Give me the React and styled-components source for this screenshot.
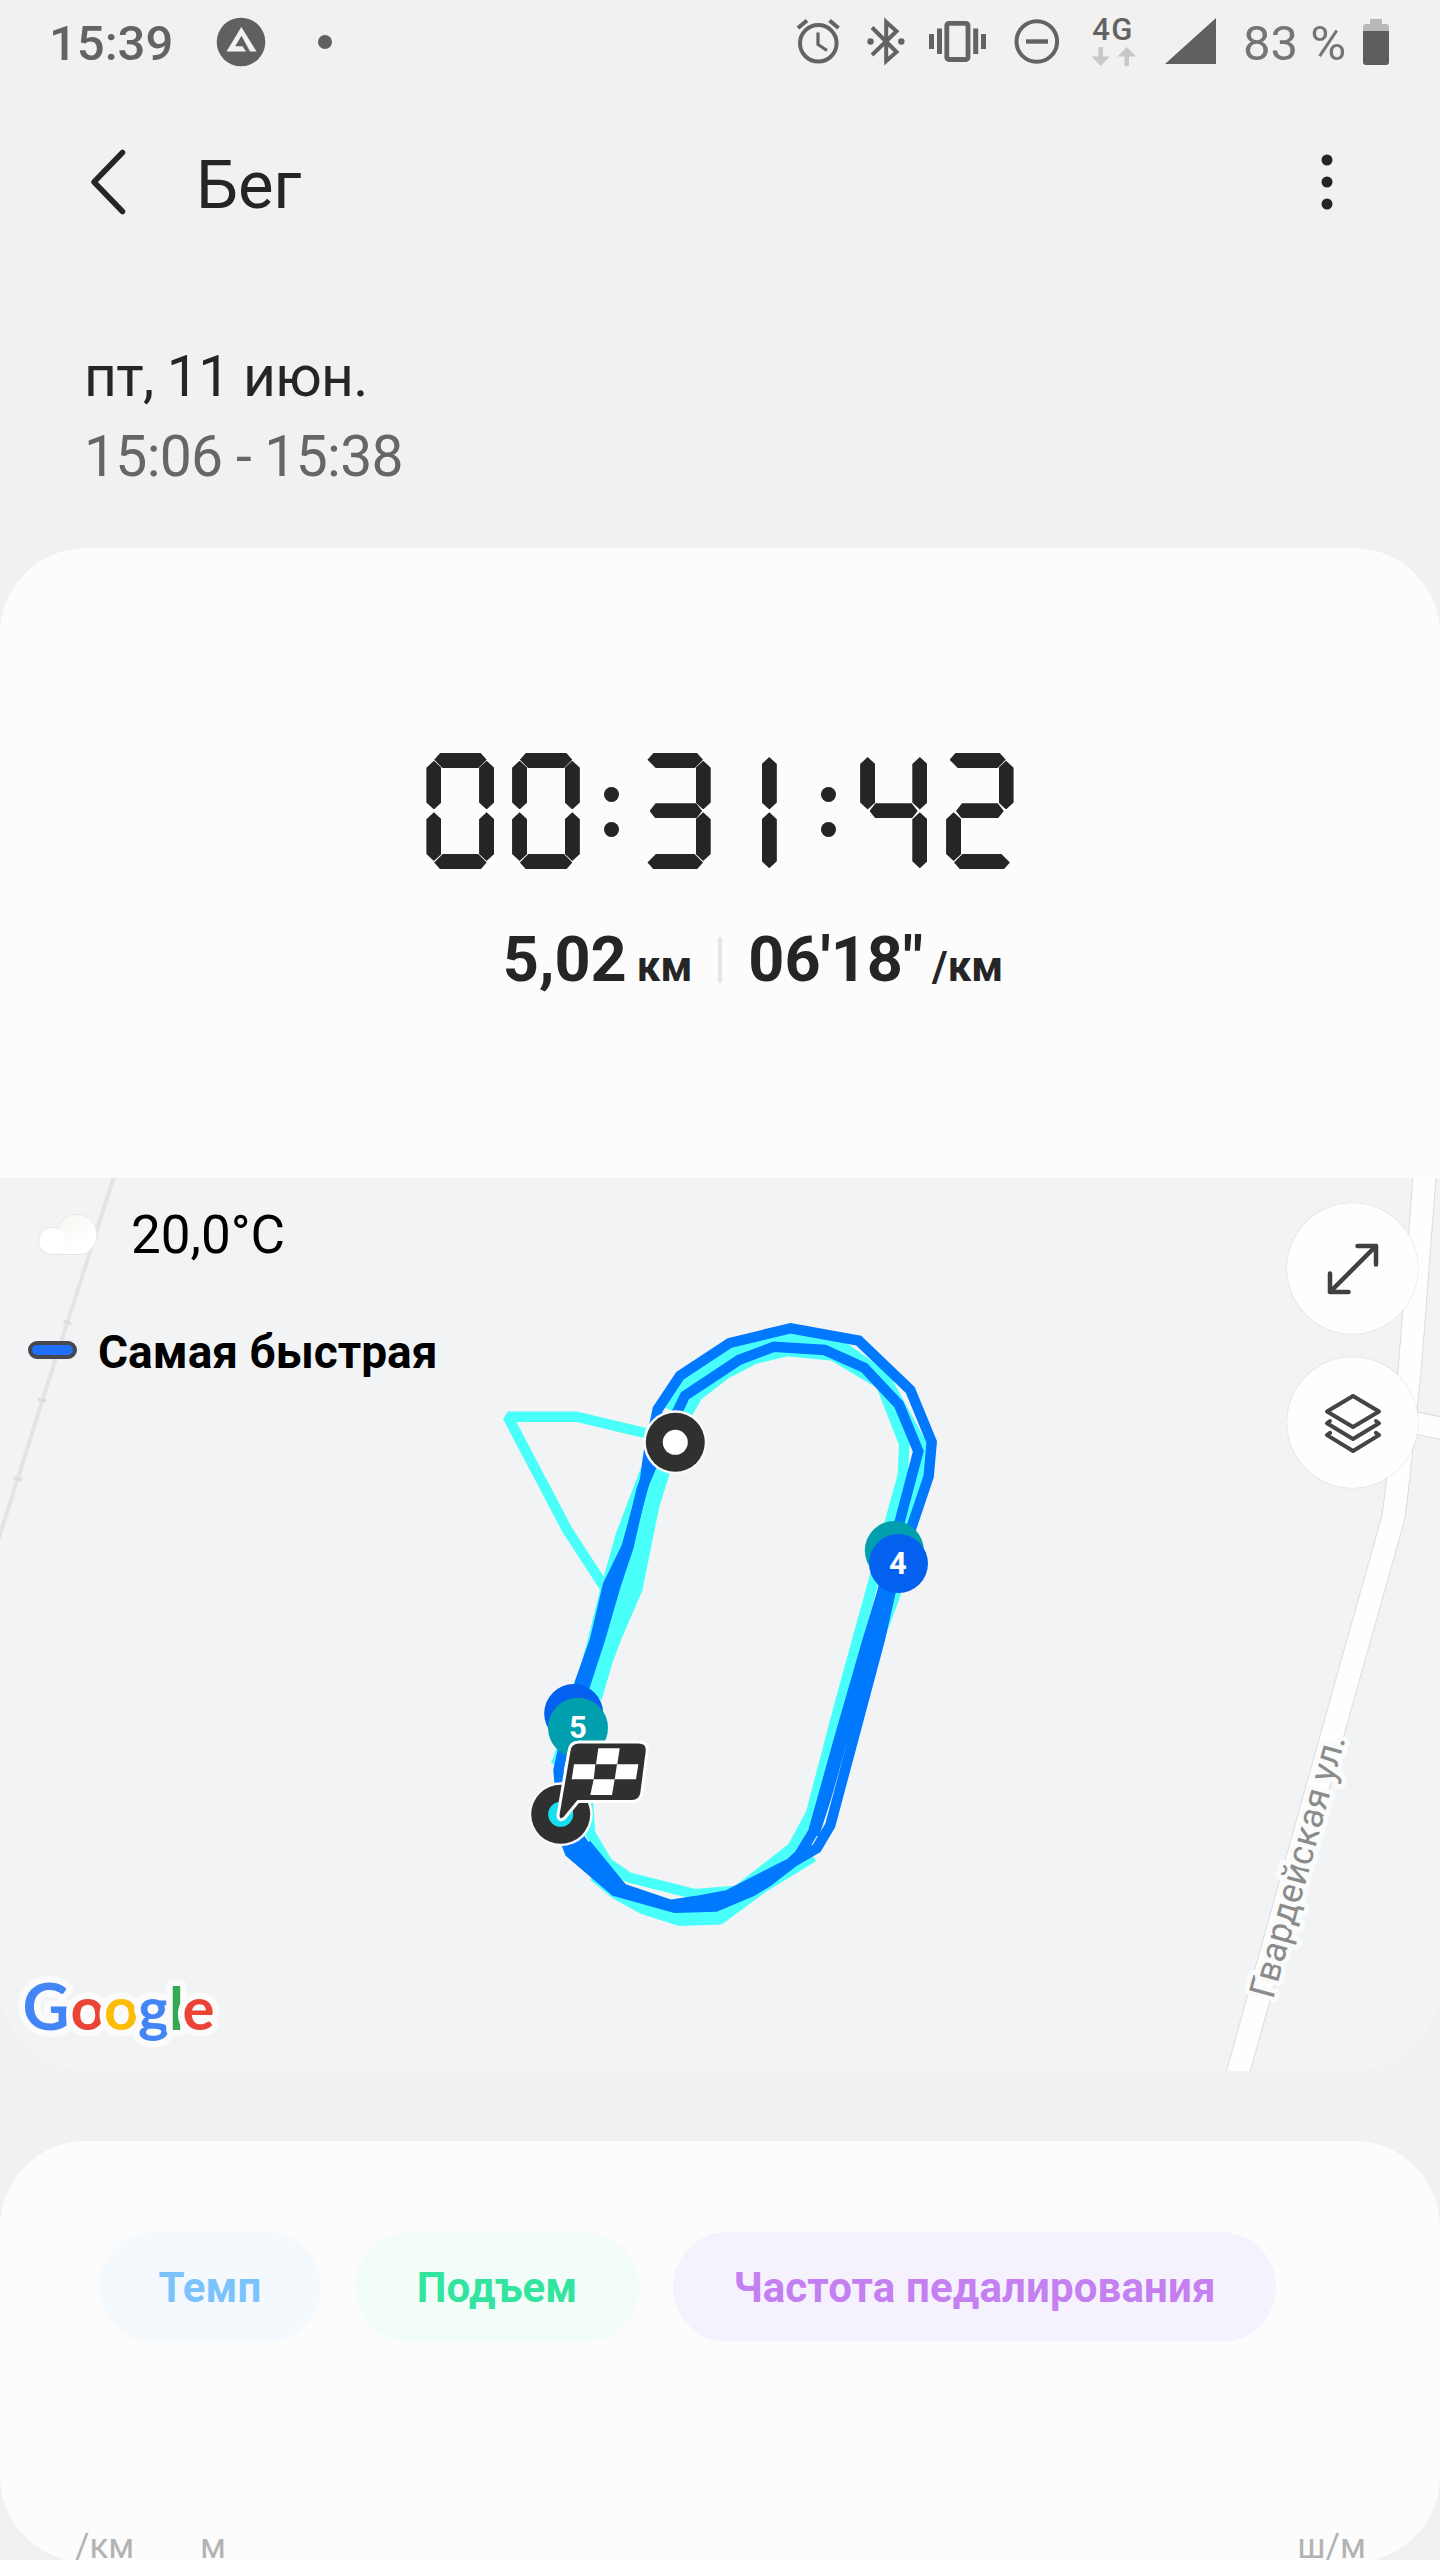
import React from 'react';
import styled, { createGlobalStyle } from 'styled-components';

/*styles start */
const GlobalStyle = createGlobalStyle`
  * {
    box-sizing: border-box;
  }

  body {
    margin: 0;
    background-color: #f1f1f1;
    font-family: Roboto, "Noto Sans", sans-serif;
    color: #252525;
  }

  svg {
    display: block;
  }
`;

const Screen = styled.div`
  display: flex;
  flex-direction: column;
  width: 1440px;
  height: 2560px;
  overflow: hidden;
  background-color: #f1f1f1;

  > * {
    flex: none;
  }
`;

const StatusBar = styled.div`
  display: flex;
  align-items: center;
  height: 87px;
  padding-left: 49px;
  color: #636363;
`;

const StatusText = styled.span`
  width: ${(props) => props.$width}px;
  margin-left: ${(props) => props.$gap || 0}px;
  font-size: 49px;
  line-height: 58px;
  font-weight: ${(props) => props.$weight || 500};
  color: ${(props) => props.$color || 'inherit'};
  white-space: nowrap;
`;

const StatusIcon = styled.svg`
  flex: none;
  height: 87px;
  width: ${(props) => props.$width}px;
  margin-left: ${(props) => props.$gap}px;
  overflow: visible;
`;

const Network = styled.div`
  display: flex;
  flex-direction: column;
  align-items: center;
  width: 46px;
  height: 87px;
  margin-left: 30px;
  padding-top: 12px;
  font-size: 31px;
  line-height: 35px;
  font-weight: 500;
  letter-spacing: 1.5px;
`;

const AppBar = styled.header`
  display: flex;
  align-items: center;
  height: 190px;
  padding: 0 107px 0 88px;
`;

const Title = styled.h1`
  flex: 1;
  margin: 5px 0 0 68px;
  font-size: 67px;
  line-height: 80px;
  font-weight: 400;
  letter-spacing: -0.3px;
`;

const DateBlock = styled.div`
  height: 271px;
  padding: 60px 84px 0;
  font-size: 57px;
  line-height: 80px;
  letter-spacing: -0.7px;
`;

const DateLine = styled.div`
  color: ${(props) => (props.$muted ? '#666' : '#252525')};
`;

const SummaryCard = styled.section`
  display: flex;
  flex-direction: column;
  align-items: center;
  height: 630px;
  padding-top: 205px;
  border-radius: 86px 86px 0 0;
  background-color: #fcfcfc;
`;

const Clock = styled.div`
  display: flex;
  height: 116px;
`;

const Digit = styled.div`
  display: grid;
  flex: none;
  width: ${(props) => props.$width}px;
  height: 116px;
  margin-left: ${(props) => props.$gap}px;
`;

const Bar = styled.i`
  grid-area: 1 / 1;
  background-color: #252525;
  margin: ${(props) => props.$y}px 0 0 ${(props) => props.$x}px;
`;

const HBar = styled(Bar)`
  width: ${(props) => props.$size}px;
  height: 15.2px;
  clip-path: polygon(
    0 ${(props) => props.$tip}%,
    ${(props) => (props.$tip > 50 ? 8.5 : 6)}px 0,
    calc(100% - ${(props) => (props.$tip > 50 ? 8.5 : 6)}px) 0,
    100% ${(props) => props.$tip}%,
    calc(100% - ${(props) => (props.$tip < 50 ? 8.5 : 6)}px) 100%,
    ${(props) => (props.$tip < 50 ? 8.5 : 6)}px 100%
  );
`;

const VBar = styled(Bar)`
  width: 15.1px;
  height: ${(props) => props.$size}px;
  clip-path: polygon(
    50% 0,
    100% 7px,
    100% calc(100% - 7px),
    50% 100%,
    0 calc(100% - 7px),
    0 7px
  );
`;

const Colon = styled.div`
  display: flex;
  flex-direction: column;
  gap: 19.5px;
  width: 15.2px;
  padding-top: 33.5px;
  margin-left: ${(props) => props.$gap}px;

  &::before,
  &::after {
    content: "";
    height: 15.5px;
    border-radius: 50%;
    background-color: #252525;
  }
`;

const Stats = styled.div`
  display: flex;
  align-items: baseline;
  margin-top: 51px;
  padding-left: 66px;
  font-weight: 700;
  line-height: 80px;
`;

const StatValue = styled.span`
  font-size: 63px;
`;

const StatUnit = styled.span`
  margin-left: ${(props) => props.$gap}px;
  font-size: 42px;
`;

const StatDivider = styled.span`
  align-self: center;
  width: 4px;
  height: 46px;
  margin: 0 26px 8px;
  background-color: #e5e5e5;
`;

const MapCard = styled.section`
  position: relative;
  height: 893px;
  border-radius: 0 0 86px 86px;
  overflow: hidden;
  background-color: #f1f3f4;
`;

const MapOverlay = styled.div`
  position: absolute;
  top: 0;
  left: 0;
  right: 0;
  display: flex;
  justify-content: space-between;
  padding: 25px 22px 0 28px;
`;

const MapInfo = styled.div`
  display: flex;
  flex-direction: column;
  color: #000;
`;

const Weather = styled.div`
  display: flex;
  align-items: center;
  height: 62px;
  padding-left: 7px;
  font-size: 53px;
  line-height: 62px;
`;

const Temperature = styled.span`
  margin: 1px 0 0 32px;
`;

const Legend = styled.div`
  display: flex;
  align-items: center;
  margin-top: 60px;
  height: 54px;
  font-size: 46px;
  line-height: 54px;
  font-weight: 700;
`;

const LegendMark = styled.span`
  width: 49px;
  height: 18px;
  margin-right: 21px;
  margin-bottom: 4px;
  border: 4px solid #46484d;
  border-radius: 9px;
  background-color: #1f70fa;
`;

const MapButtons = styled.div`
  display: flex;
  flex-direction: column;
  gap: 23px;
`;

const RoundButton = styled.button`
  display: flex;
  align-items: center;
  justify-content: center;
  width: 131px;
  height: 131px;
  padding: 0;
  border: 0;
  border-radius: 50%;
  background-color: #fefefe;
  box-shadow: 0 0 1px rgba(0, 0, 0, 0.25);
`;

const ChartCard = styled.section`
  display: flex;
  flex-direction: column;
  justify-content: space-between;
  height: 421px;
  margin-top: 70px;
  padding: 91px 74px 0 99px;
  border-radius: 86px;
  background-color: #fcfcfc;
`;

const Chips = styled.div`
  display: flex;
  gap: 34px;
`;

const Chip = styled.button`
  flex: none;
  width: ${(props) => props.$width}px;
  height: 110px;
  padding: 0;
  border: 0;
  border-radius: 55px;
  font-family: inherit;
  font-size: 42px;
  font-weight: 700;
  letter-spacing: 0.15px;
  white-space: nowrap;
  color: ${(props) => props.$color};
  background-color: ${(props) => props.$bg};
`;

const AxisRow = styled.div`
  display: flex;
  height: 27px;
  margin-left: -24px;
  font-size: 35px;
  line-height: 24px;
  color: #b3b3b3;
`;

const AxisUnit = styled.span`
  width: ${(props) => props.$width || 'auto'};
  margin-left: ${(props) => (props.$end ? 'auto' : 0)};
`;
/*styles end */

// every bar of a digit: [direction, x, y, size, tip]
const DIGITS = {
  0: {
    width: 67.8,
    bars: [
      ['h', 7.8, 0, 52.5, 44],
      ['v', 0, 7.7, 48.7],
      ['v', 52.7, 7.7, 48.7],
      ['v', 0, 59.3, 48.7],
      ['v', 52.7, 59.3, 48.7],
      ['h', 7.8, 101, 52.5, 56],
    ],
  },
  1: {
    width: 15.1,
    bars: [
      ['v', 0, 4, 52.6],
      ['v', 0, 59.3, 56],
    ],
  },
  2: {
    width: 67.5,
    bars: [
      ['h', 3.4, 0, 56.3, 44],
      ['v', 52.4, 7.7, 48.7],
      ['h', 9.9, 50.3, 47.8, 50],
      ['v', 0, 59.3, 48.7],
      ['h', 7.9, 101, 55.9, 56],
    ],
  },
  3: {
    width: 63.3,
    bars: [
      ['h', 0, 0, 55.6, 44],
      ['v', 48.2, 7.7, 48.7],
      ['h', 2.1, 50.3, 52.6, 50],
      ['v', 48.2, 59.3, 48.7],
      ['h', 0, 101, 55.6, 56],
    ],
  },
  4: {
    width: 67.5,
    bars: [
      ['v', 0, 4, 52.6],
      ['v', 52.2, 4, 52.6],
      ['h', 9.4, 50.3, 48.2, 50],
      ['v', 52.2, 59.3, 56],
    ],
  },
};

const TIME = [
  { char: '0', gap: 0 },
  { char: '0', gap: 17.9 },
  { char: ':', gap: 24.3 },
  { char: '3', gap: 28.1 },
  { char: '1', gap: 51 },
  { char: ':', gap: 44.3 },
  { char: '4', gap: 23.8 },
  { char: '2', gap: 18.5 },
];

const SLOW_LAPS = [
  '645,1433 576.7,1416.7 507.7,1416.7 567.3,1530 605,1588',
  '672,1450 688.3,1411.7 697.3,1396 725.7,1374 753.3,1359.3 787.3,1351 833.3,1355.7 881,1384.3 904.3,1444.3 902.7,1475.7 889.7,1522.7 857.3,1640 837.3,1712.7 811,1813.3 792.7,1847.3 737.3,1890.7 695,1894.3 628.3,1877.3 607.3,1862.7 590,1833 588,1803',
  '670,1410 682,1386 733,1352 782,1338 842,1346 885,1377 910,1423 925,1450 921,1477 904,1530 895.3,1595 880,1636',
  '813.3,1856.7 763.3,1887.3 720,1919.3 679.7,1920.7 642.3,1908.7 616,1894.3 593.3,1875.7',
  '763,1883 717,1912 678,1914 620,1896',
  '563,1745 556,1765',
];

const FAST_LAPS = [
  '565,1735 579.7,1683 595,1640 608,1585 626.7,1546.7 645,1480 648.7,1453 657.7,1409.3 680,1375.7 729.7,1343 790.7,1328.3 858.7,1340.7 910.3,1390 931.7,1442 928.7,1476.3 911.7,1526.7 890.3,1593 879.7,1640 830.3,1825.3 816.7,1848.3 792.7,1862.3 767.3,1882 751.7,1891.3 715.7,1906.7 675,1907.7 615,1891 570,1852.7 565,1840',
  '560,1787 558.5,1770 563,1750 585.7,1683 600.3,1638.3 615.7,1585 628.7,1546 641.7,1489 651.3,1466.7 676.7,1413 685,1395.7 739,1360 774,1346.7 824.7,1350 864.3,1367.7 899,1404.7 918.3,1451.3 899.3,1523 882,1593 867.7,1640 839.7,1737 813.3,1831.7 799.3,1855 790,1863.3 728.3,1895 696,1901 670.7,1905 622.7,1888.7 586,1844',
  '886,1600 872,1650 844,1735 826,1798 814,1835',
  '888,1600 875,1650 856,1724',
  '568,1838 582,1852 618,1889',
  '578,1836 592,1856 620,1889',
];

const CHIPS = [
  { label: 'Темп', width: 222, color: '#7cc3fe', bg: '#f4f9fd' },
  { label: 'Подъем', width: 284, color: '#33e49f', bg: '#f2fcf9' },
  { label: 'Частота педалирования', width: 603, color: '#c47ff1', bg: '#f5f1fd' },
];

const StopWatch = () => (
  <Clock role="img" aria-label="00:31:42">
    {TIME.map(({ char, gap }, index) =>
      char === ':' ? (
        <Colon key={index} $gap={gap} />
      ) : (
        <Digit key={index} $gap={gap} $width={DIGITS[char].width}>
          {DIGITS[char].bars.map(([dir, x, y, size, tip], i) =>
            dir === 'h' ? (
              <HBar key={i} $x={x} $y={y} $size={size} $tip={tip} />
            ) : (
              <VBar key={i} $x={x} $y={y} $size={size} />
            )
          )}
        </Digit>
      )
    )}
  </Clock>
);

const Status = () => (
  <StatusBar>
    <StatusText $width={125}>15:39</StatusText>
    <StatusIcon $width={49} $gap={42} viewBox="216 0 49 87">
      <circle cx="241" cy="42" r="24.3" fill="#606060" />
      <path d="M250 51.5h6.5L241.3 27 226.5 51.5H246l-3.5-5.3h-7.3l6.3-10.5z" fill="#f1f1f1" />
    </StatusIcon>
    <StatusIcon $width={14} $gap={53} viewBox="318 0 14 87">
      <circle cx="325" cy="42" r="7" fill="#606060" />
    </StatusIcon>
    {/* alarm */}
    <StatusIcon $width={43} $gap={465} viewBox="797 0 43 87" fill="none" stroke="#636363">
      <circle cx="818.3" cy="43.3" r="18.3" strokeWidth="4" />
      <path d="M818 32.5v12l9 6" strokeWidth="3.2" />
      <path d="M798 28l9-7.5M838.5 28l-9-7.5" strokeWidth="4.2" />
    </StatusIcon>
    {/* bluetooth */}
    <StatusIcon $width={38} $gap={27} viewBox="867 0 38 87" fill="none" stroke="#636363">
      <path d="M872 27.5l24.5 24.5-10.3 9V22l10.3 9.3L872 55" strokeWidth="4" />
      <circle cx="870.5" cy="41.5" r="3.2" fill="#636363" stroke="none" />
      <circle cx="901.3" cy="41.5" r="3.2" fill="#636363" stroke="none" />
    </StatusIcon>
    {/* vibration */}
    <StatusIcon $width={57} $gap={24} viewBox="929 0 57 87">
      <rect x="946.8" y="23.3" width="21.2" height="36.2" rx="2" fill="none" stroke="#636363" strokeWidth="4.8" />
      <path d="M929 34h5v15h-5zM937 28.5h5V54h-5zM973.2 28.5h5V54h-5zM981 34h5v15h-5z" fill="#636363" />
    </StatusIcon>
    <StatusIcon $width={46} $gap={28} viewBox="1014 0 46 87" fill="none" stroke="#636363">
      <circle cx="1036.8" cy="41.5" r="20.3" strokeWidth="4" />
      <path d="M1026 41.5h22" strokeWidth="4.4" />
    </StatusIcon>
    <Network>
      4G
      <svg width="45" height="19" viewBox="0 0 45 19" fill="#c8c8c8">
        <path d="M7.5 0h4.5v9.5h6.8L9.7 19 .5 9.5h7z" />
        <path d="M33.5 19H38V9.5h7L35.7 0 26.5 9.5h7z" />
      </svg>
    </Network>
    <StatusIcon $width={51} $gap={29} viewBox="1165 0 51 87">
      <path d="M1165 64L1216 18v46z" fill="#606060" />
    </StatusIcon>
    <StatusText $gap={27} $width={106} $weight={400} $color="#757575">
      83 %
    </StatusText>
    <StatusIcon $width={26} $gap={14} viewBox="1363 0 26 87">
      <path d="M1370 19h12v5h5l2 2v8h-26v-8l2-2h5z" fill="#b8b8b8" />
      <path d="M1363 31h26v31q0 3-3 3h-20q-3 0-3-3z" fill="#5e5e5e" />
    </StatusIcon>
  </StatusBar>
);

const RouteMap = () => (
  <svg width="1440" height="893" viewBox="0 1178 1440 893">
    {/* roads */}
    <g fill="none">
      <path d="M116 1170L89 1255 67.5 1322 42.5 1400 18 1478-2 1541" stroke="#e3e4e5" strokeWidth="4" />
      <path d="M63.5 1321.500l8 2M38 1399l8 2M14 1478l8 2" stroke="#dbdcdd" strokeWidth="3" />
      <path d="M1425 1170L1409.5 1373 1398 1480 1393.5 1517 1373 1590 1347.5 1680 1237 2076" stroke="#dcdddd" strokeWidth="24" />
      <path d="M1410 1421.5L1450 1430" stroke="#dcdddd" strokeWidth="23" />
      <path d="M1425 1170L1409.5 1373 1398 1480 1393.5 1517 1373 1590 1347.5 1680 1237 2076" stroke="#fefefe" strokeWidth="22" />
      <path d="M1407 1421L1450 1430" stroke="#fefefe" strokeWidth="21" />
    </g>
    <text
      transform="translate(1273 2000) rotate(-74.5)"
      fontSize="36"
      textLength="271"
      fill="#8b8b8b"
      stroke="#fafbfb"
      strokeWidth="10"
      strokeLinejoin="round"
      paintOrder="stroke"
    >
      Гвардейская ул.
    </text>

    {/* laps */}
    <path
      d="M648 1455L640 1470 616 1533 600 1590 587.7 1640 574 1690 601.7 1700 612.3 1663.3 621.7 1638.3 642.3 1590.7 659.3 1506.7 669 1476 675 1450z"
      fill="#48fff9"
    />
    <g fill="none" stroke="#48fff9" strokeWidth="10.4" strokeLinejoin="bevel">
      {SLOW_LAPS.map((points) => (
        <polyline key={points} points={points} />
      ))}
    </g>
    <g fill="none" stroke="#0079ff" strokeWidth="10.4">
      {FAST_LAPS.map((points) => (
        <polyline key={points} points={points} />
      ))}
    </g>

    {/* kilometre marks */}
    <circle cx="894.3" cy="1550.5" r="29.5" fill="#009fae" />
    <circle cx="898.5" cy="1563.5" r="29.5" fill="#0460ee" />
    <circle cx="573.7" cy="1713.5" r="29.5" fill="#0460ee" />
    <circle cx="578" cy="1727.7" r="30" fill="#009fae" />
    <g fill="#fff" fontSize="31" fontWeight="700" textAnchor="middle">
      <text x="898" y="1574">4</text>
      <text x="578" y="1738">5</text>
    </g>

    {/* start */}
    <circle cx="675.3" cy="1442.3" r="32" fill="#fafafa" />
    <circle cx="675.3" cy="1442.3" r="29.5" fill="#303030" />
    <circle cx="675.3" cy="1442.3" r="12.5" fill="#fff" />

    {/* finish */}
    <circle cx="560.7" cy="1814.3" r="32" fill="#fafafa" />
    <circle cx="560.7" cy="1814.3" r="29.5" fill="#303030" />
    <circle cx="560.7" cy="1814.3" r="12.5" fill="#16dff0" />
    <path
      d="M570.5 1751Q571.5 1743.5 579 1743.5H638.5Q646.5 1743.5 645.7 1751L640.3 1793Q639 1800 632 1800H577.5L563.5 1817Q559.5 1820 559.5 1815z"
      fill="#303030"
      stroke="#fff"
      strokeWidth="6"
      strokeLinejoin="round"
      paintOrder="stroke"
    />
    <path
      d="M598.3 1748.3h21.4l-2.4 16h-21.3zM574 1764.3h21.4l-1.7 15h-22zM617 1764.3h21.4l-2.4 15h-21.3zM593.7 1779.3h21l-2.7 15.7h-21.7z"
      fill="#fff"
    />

    <text
      y="2029.5"
      fontFamily="Lato, Roboto, sans-serif"
      fontSize="60"
      fontWeight="700"
      stroke="#fbfbfc"
      strokeWidth="13"
      strokeLinejoin="round"
      paintOrder="stroke"
    >
      <tspan x="22.5" fontSize="65" fill="#4385f5">G</tspan>
      <tspan x="70.5" fill="#e94436">o</tspan>
      <tspan x="104" fill="#fbbd06">o</tspan>
      <tspan x="138" fill="#4385f5">g</tspan>
      <tspan x="169" fill="#35a854">l</tspan>
      <tspan x="182.5" fill="#e94436">e</tspan>
    </text>
  </svg>
);

const CloudIcon = () => (
  <svg width="64" height="48" viewBox="35 1210 64 48">
    <defs>
      <linearGradient id="cloud" x1="0" y1="0" x2="1" y2="1">
        <stop offset="0.2" stopColor="#f7f5f1" />
        <stop offset="0.7" stopColor="#fff" />
      </linearGradient>
    </defs>
    <path
      d="M52 1254.5a13.5 13.5 0 1 1 5-26A20.5 20.5 0 1 1 87 1252.5q-3 2-8 2z"
      fill="url(#cloud)"
      stroke="#e6e6e6"
      strokeWidth="1"
    />
    <circle cx="52.5" cy="1241" r="12.8" fill="#fff" />
  </svg>
);

const App = () => {
  return (
    <>
      <GlobalStyle />
      <Screen>
        <Status />

        <AppBar>
          <svg width="40" height="66" viewBox="88 149 40 66" fill="none">
            <path d="M122.5 152.5L94 182l28.5 29.5" stroke="#252525" strokeWidth="5.5" strokeLinecap="round" strokeLinejoin="round" />
          </svg>
          <Title>Бег</Title>
          <svg width="12" height="60" viewBox="0 0 12 60" fill="#252525">
            <circle cx="6" cy="8" r="5.5" />
            <circle cx="6" cy="30" r="5.5" />
            <circle cx="6" cy="52" r="5.5" />
          </svg>
        </AppBar>

        <DateBlock>
          <DateLine>пт, 11 июн.</DateLine>
          <DateLine $muted>15:06 - 15:38</DateLine>
        </DateBlock>

        <SummaryCard>
          <StopWatch />
          <Stats>
            <StatValue>5,02</StatValue>
            <StatUnit $gap={10}>км</StatUnit>
            <StatDivider />
            <StatValue>06'18"</StatValue>
            <StatUnit $gap={9}>/км</StatUnit>
          </Stats>
        </SummaryCard>

        <MapCard>
          <RouteMap />
          <MapOverlay>
            <MapInfo>
              <Weather>
                <CloudIcon />
                <Temperature>20,0°C</Temperature>
              </Weather>
              <Legend>
                <LegendMark />
                Самая быстрая
              </Legend>
            </MapInfo>
            <MapButtons>
              <RoundButton>
                <svg width="54" height="54" viewBox="0 0 54 54" fill="none" stroke="#404040" strokeWidth="4.5" strokeLinecap="round" strokeLinejoin="round">
                  <path d="M31.5 4H50v18.5M4 31.5V50h18.5M50 4L4 50" />
                </svg>
              </RoundButton>
              <RoundButton>
                <svg width="58" height="60" viewBox="0 0 58 60" fill="none" stroke="#444" strokeWidth="4" strokeLinecap="round" strokeLinejoin="round">
                  <path d="M29 3L55 18.5 29 34 3 18.5z" />
                  <path d="M6 28l-3 2.3L29 46l26-15.7-3-2.3" />
                  <path d="M6 39.8l-3 2.3L29 58l26-15.900-3-2.3" />
                </svg>
              </RoundButton>
            </MapButtons>
          </MapOverlay>
        </MapCard>

        <ChartCard>
          <Chips>
            {CHIPS.map((chip) => (
              <Chip key={chip.label} $width={chip.width} $color={chip.color} $bg={chip.bg}>
                {chip.label}
              </Chip>
            ))}
          </Chips>
          <AxisRow>
            <AxisUnit $width="125px">/км</AxisUnit>
            <AxisUnit>м</AxisUnit>
            <AxisUnit $end>ш/м</AxisUnit>
          </AxisRow>
        </ChartCard>
      </Screen>
    </>
  );
};

export default App;
